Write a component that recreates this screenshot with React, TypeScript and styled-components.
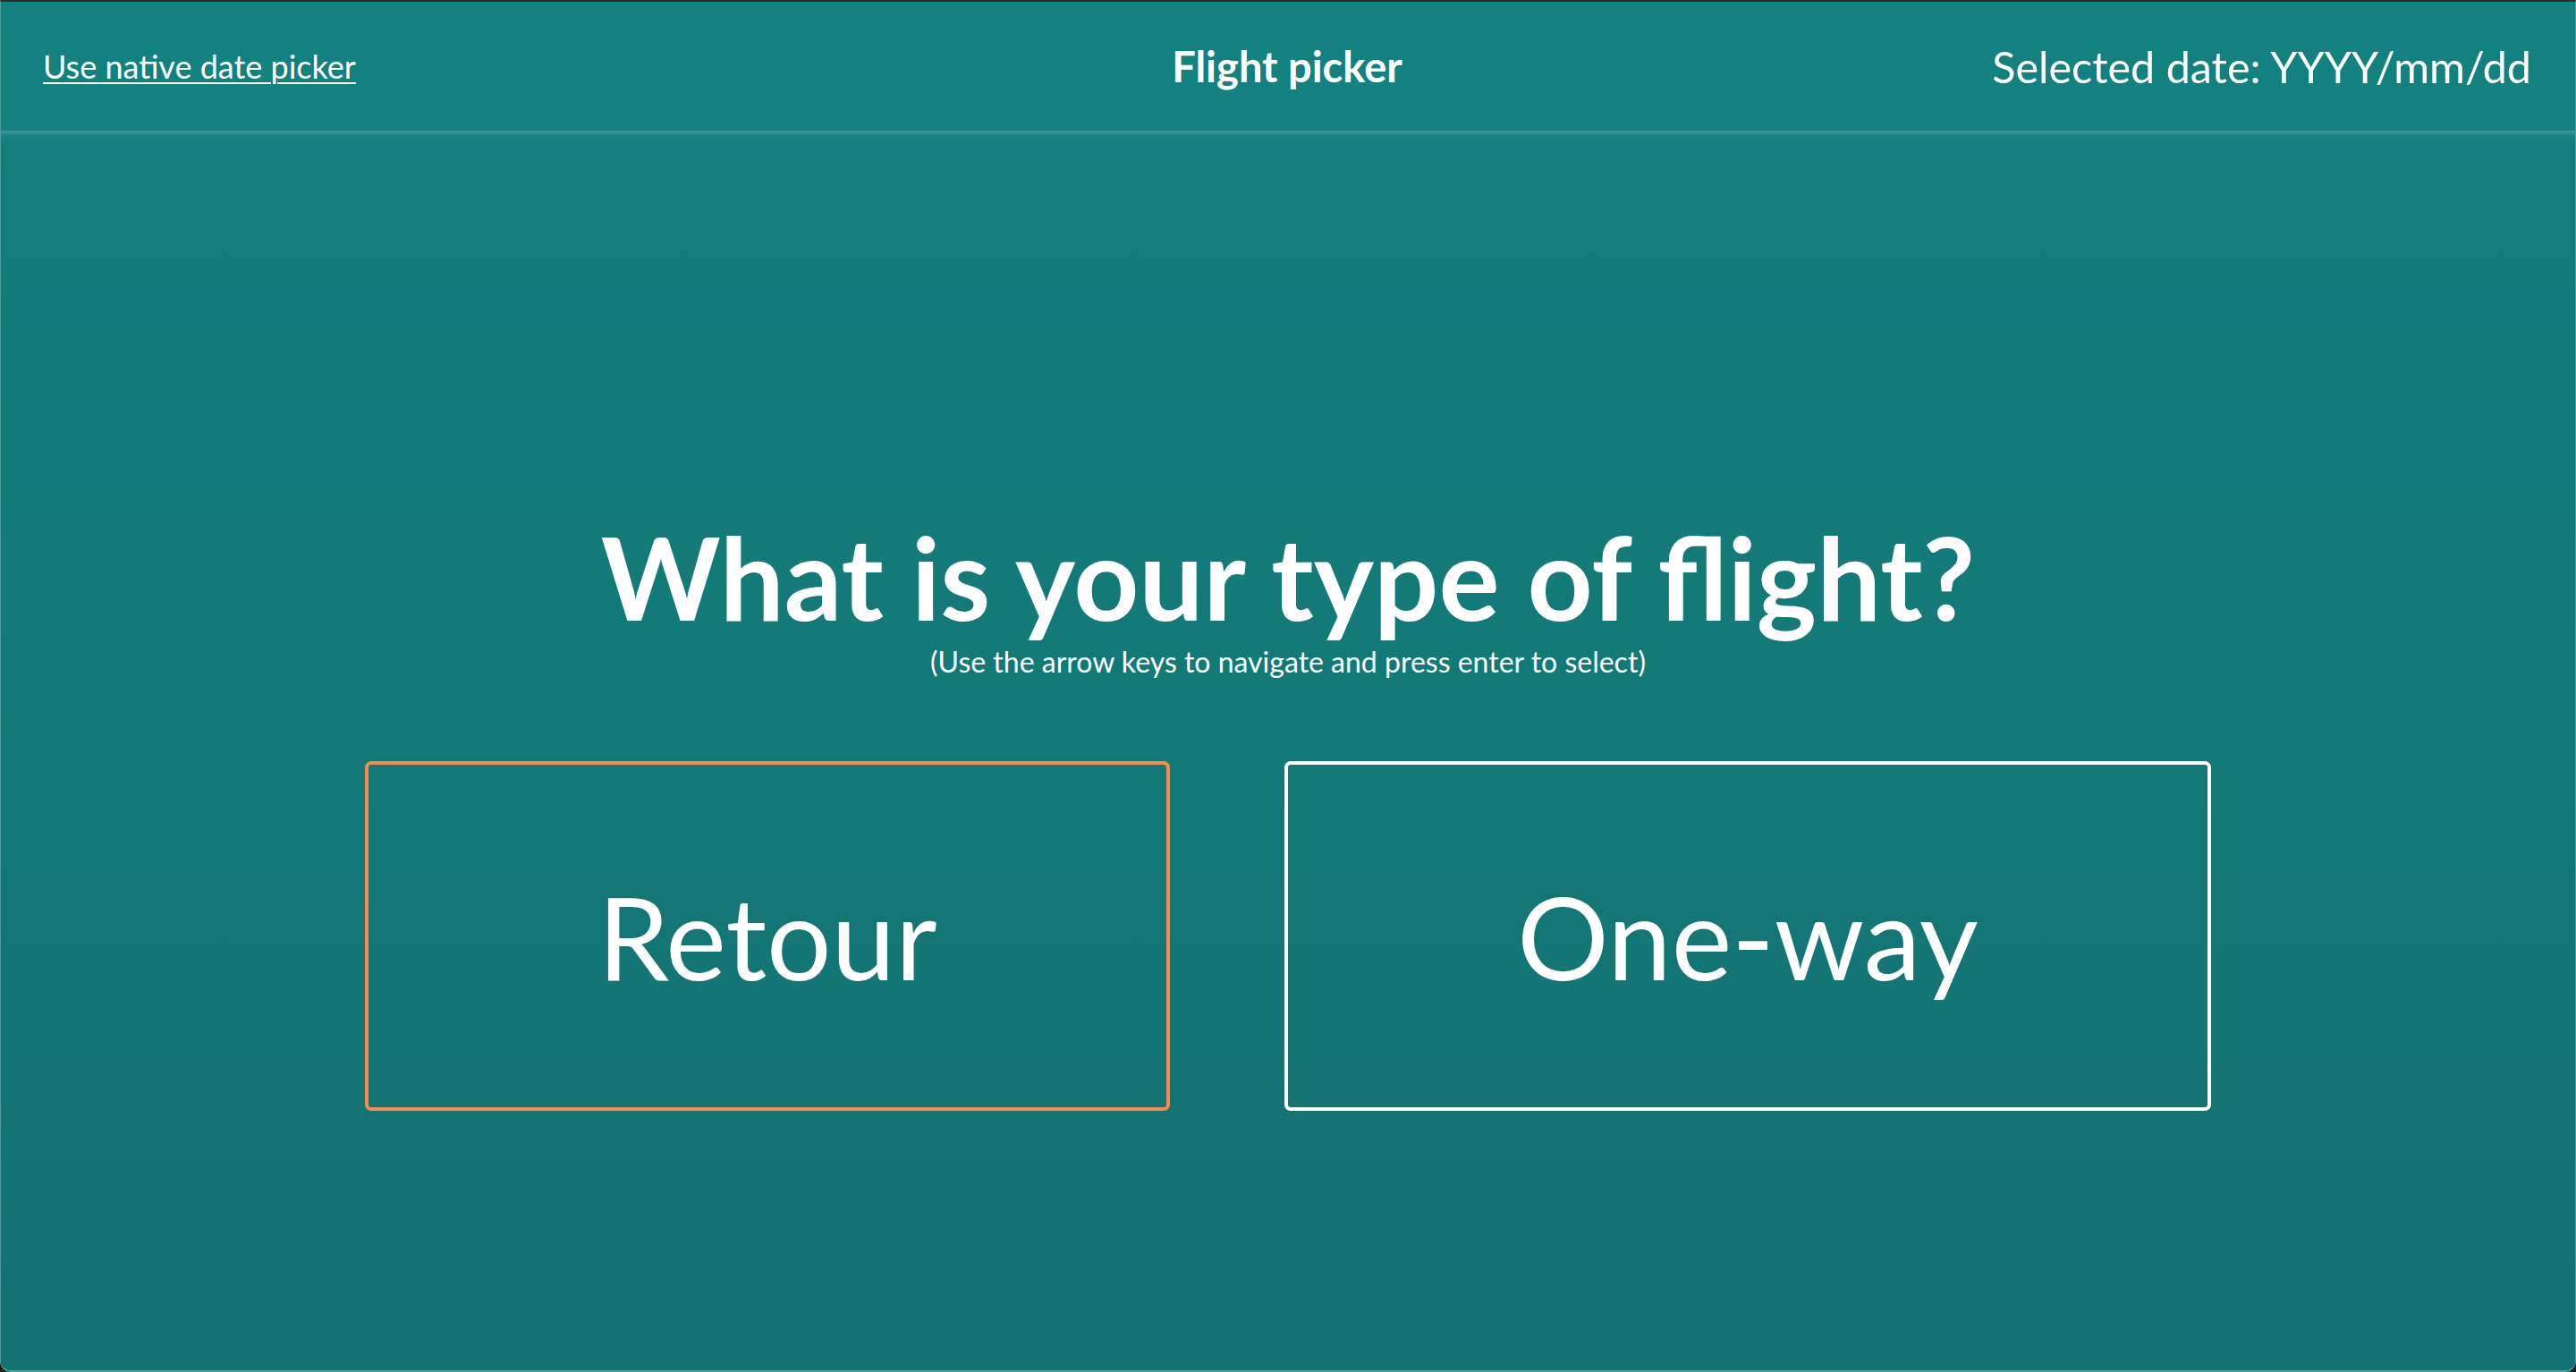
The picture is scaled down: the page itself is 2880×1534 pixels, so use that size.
import React from 'react'
import styled, { createGlobalStyle } from 'styled-components';

const GlobalStyle = createGlobalStyle`
  html, body {
    margin: 0;
    padding: 0;
    background: #1d1d1d;
  }
  * { box-sizing: border-box; }
`;

const Window = styled.div`
  height: 1534px;
  display: flex;
  flex-direction: column;
  border-top: 2px solid #2b2b2b;
  border-left: 1px solid #4f9e9a;
  border-right: 1px solid #4f9e9a;
  border-bottom: 2px solid #4f9e9a;
  border-radius: 0 0 12px 12px;
  overflow: hidden;
  font-family: Lato, "Open Sans", sans-serif;
  color: #fff;
`;

const Header = styled.header`
  height: 144px;
  flex: none;
  display: grid;
  grid-template-columns: 1fr auto 1fr;
  align-items: center;
  padding: 0 49px 0 47px;
  background: #13817f;
`;

const NativeLink = styled.a`
  justify-self: start;
  font-size: 36px;
  color: #fff;
  text-decoration: underline;
  text-underline-offset: 4px;
  text-decoration-thickness: 2px;
  cursor: pointer;
`;

const Title = styled.h1`
  margin: 0;
  font-size: 47px;
  font-weight: 700;
`;

const SelectedDate = styled.div`
  justify-self: end;
  font-size: 48.5px;
`;

const Main = styled.main`
  flex: 1;
  display: flex;
  flex-direction: column;
  align-items: center;
  padding-top: 422px;
  background: linear-gradient(
    to bottom,
    #3f9a95 0px,
    #1a837f 6px,
    #137e7b 14px,
    #137a78 40%,
    #137170 100%
  );
`;

const Question = styled.h2`
  margin: 0;
  font-size: 127.5px;
  line-height: 1.2;
  font-weight: 700;
`;

const Hint = styled.p`
  margin: 0;
  font-size: 32px;
  line-height: 1.2;
`;

const Options = styled.div`
  width: 2064px;
  margin-top: 92px;
  display: flex;
  gap: 128px;
`;

const Option = styled.button<{ $active?: boolean }>`
  flex: 1 1 auto;
  height: 391px;
  padding: 0 40px;
  background: transparent;
  border: 4px solid ${p => (p.$active ? '#f88a50' : '#ffffff')};
  border-radius: 7px;
  color: #fff;
  font-family: Lato, "Open Sans", sans-serif;
  font-size: 128px;
  font-weight: 400;
  cursor: pointer;
`;

const App: React.FC = () => {
  return (
    <>
      <GlobalStyle />
      <Window>
        <Header>
          <NativeLink>Use native date picker</NativeLink>
          <Title>Flight picker</Title>
          <SelectedDate>Selected date: YYYY/mm/dd</SelectedDate>
        </Header>
        <Main>
          <Question>What is your type of flight?</Question>
          <Hint>(Use the arrow keys to navigate and press enter to select)</Hint>
          <Options>
            <Option $active>Retour</Option>
            <Option>One-way</Option>
          </Options>
        </Main>
      </Window>
    </>
  )
};

export default App;
